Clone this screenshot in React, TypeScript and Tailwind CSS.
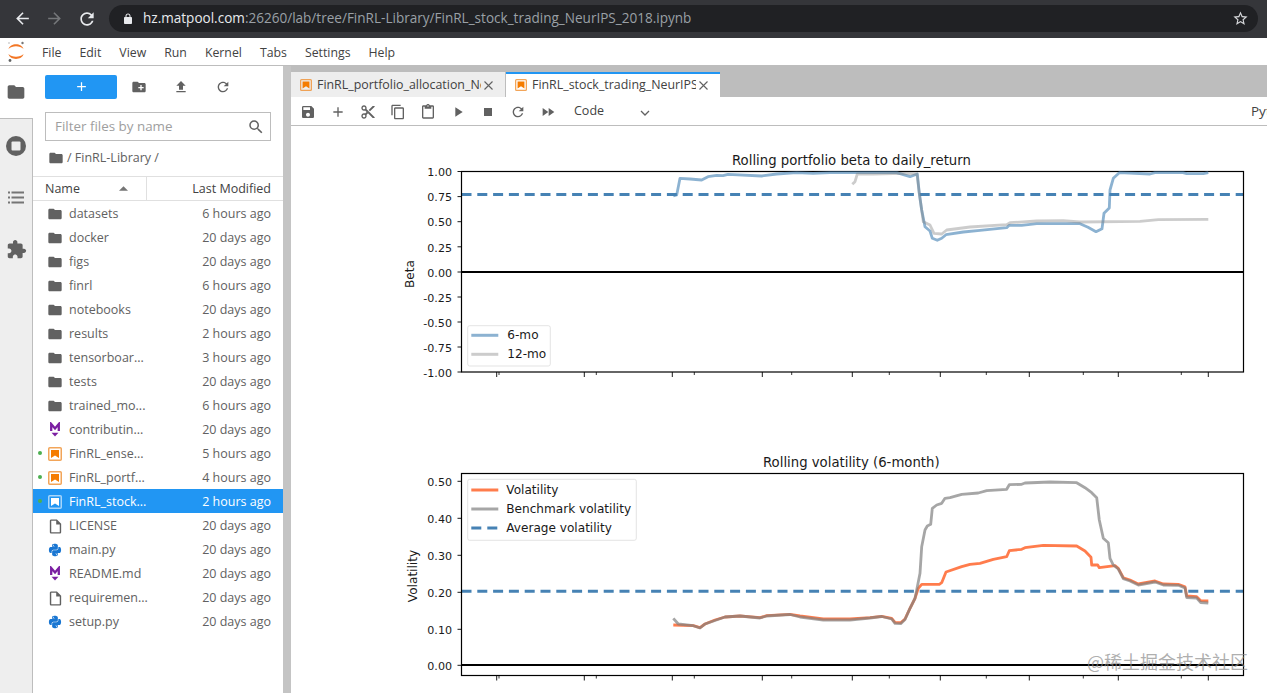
import { FaPython } from 'react-icons/fa';

const P = {
  folder: 'M10 4H4c-1.1 0-2 .9-2 2v12c0 1.1.9 2 2 2h16c1.1 0 2-.9 2-2V8c0-1.1-.9-2-2-2h-8l-2-2z',
  newFolder: 'M20 6h-8l-2-2H4c-1.11 0-1.99.89-1.99 2L2 18c0 1.11.89 2 2 2h16c1.11 0 2-.89 2-2V8c0-1.11-.89-2-2-2zm-1 8h-3v3h-2v-3h-3v-2h3V9h2v3h3v2z',
  upload: 'M9 16h6v-6h4l-7-7-7 7h4zm-4 2h14v2H5z',
  refresh: 'M17.65 6.35C16.2 4.9 14.21 4 12 4c-4.42 0-7.99 3.58-7.99 8s3.57 8 7.99 8c3.73 0 6.84-2.55 7.73-6h-2.08c-.82 2.33-3.04 4-5.65 4-3.31 0-6-2.69-6-6s2.69-6 6-6c1.66 0 3.14.69 4.22 1.78L13 11h7V4l-2.35 2.35z',
  search: 'M15.5 14h-.79l-.28-.27A6.47 6.47 0 0 0 16 9.5 6.5 6.5 0 1 0 9.5 16c1.61 0 3.09-.59 4.23-1.57l.27.28v.79l5 4.99L20.49 19l-4.99-5zm-6 0C7.01 14 5 11.99 5 9.5S7.01 5 9.5 5 14 7.01 14 9.5 11.99 14 9.5 14z',
  save: 'M17 3H5c-1.11 0-2 .9-2 2v14c0 1.1.89 2 2 2h14c1.1 0 2-.9 2-2V7l-4-4zm-5 16c-1.66 0-3-1.34-3-3s1.34-3 3-3 3 1.34 3 3-1.34 3-3 3zm3-10H5V5h10v4z',
  add: 'M19 13h-6v6h-2v-6H5v-2h6V5h2v6h6v2z',
  cut: 'M9.64 7.64c.23-.5.36-1.05.36-1.64 0-2.21-1.79-4-4-4S2 3.79 2 6s1.79 4 4 4c.59 0 1.14-.13 1.64-.36L10 12l-2.36 2.36C7.14 14.13 6.59 14 6 14c-2.21 0-4 1.79-4 4s1.79 4 4 4 4-1.79 4-4c0-.59-.13-1.14-.36-1.64L12 14l7 7h3v-1L9.64 7.64zM6 8c-1.1 0-2-.89-2-2s.9-2 2-2 2 .89 2 2-.9 2-2 2zm0 12c-1.1 0-2-.89-2-2s.9-2 2-2 2 .89 2 2-.9 2-2 2zm6-7.5c-.28 0-.5-.22-.5-.5s.22-.5.5-.5.5.22.5.5-.22.5-.5.5zM19 3l-6 6 2 2 7-7V3z',
  copy: 'M16 1H4c-1.1 0-2 .9-2 2v14h2V3h12V1zm3 4H8c-1.1 0-2 .9-2 2v14c0 1.1.9 2 2 2h11c1.1 0 2-.9 2-2V7c0-1.1-.9-2-2-2zm0 16H8V7h11v14z',
  paste: 'M19 2h-4.18C14.4.84 13.3 0 12 0c-1.3 0-2.4.84-2.82 2H5c-1.1 0-2 .9-2 2v16c0 1.1.9 2 2 2h14c1.1 0 2-.9 2-2V4c0-1.1-.9-2-2-2zm-7 0c.55 0 1 .45 1 1s-.45 1-1 1-1-.45-1-1 .45-1 1-1zm7 18H5V4h2v3h10V4h2v16z',
  play: 'M8 5v14l11-7z',
  stop: 'M6 6h12v12H6z',
  ff: 'M4 18l8.5-6L4 6v12zm9-12v12l8.5-6L13 6z',
  ext: 'M20.5 11H19V7c0-1.1-.9-2-2-2h-4V3.5C13 2.12 11.88 1 10.5 1S8 2.12 8 3.5V5H4c-1.1 0-1.99.9-1.99 2v3.8H3.5c1.49 0 2.7 1.21 2.7 2.7s-1.21 2.7-2.7 2.7H2V20c0 1.1.9 2 2 2h3.8v-1.5c0-1.49 1.21-2.7 2.7-2.7 1.49 0 2.7 1.21 2.7 2.7V22H17c1.1 0 2-.9 2-2v-4h1.5c1.38 0 2.5-1.12 2.5-2.5S21.88 11 20.5 11z',
  back: 'M20 11H7.83l5.59-5.59L12 4l-8 8 8 8 1.41-1.41L7.83 13H20v-2z',
  forward: 'M4 11h12.17l-5.59-5.59L12 4l8 8-8 8-1.41-1.41L16.17 13H4v-2z',
  lock: 'M18 8h-1V6c0-2.76-2.24-5-5-5S7 3.24 7 6v2H6c-1.1 0-2 .9-2 2v10c0 1.1.9 2 2 2h12c1.1 0 2-.9 2-2V10c0-1.1-.9-2-2-2zM9 8V6c0-1.66 1.34-3 3-3s3 1.34 3 3v2H9z',
  star: 'M22 9.24l-7.19-.62L12 2 9.19 8.63 2 9.24l5.46 4.73L5.82 21 12 17.27 18.18 21l-1.63-7.03L22 9.24zM12 15.4l-3.76 2.27 1-4.28-3.32-2.88 4.38-.38L12 6.1l1.71 4.04 4.38.38-3.32 2.88 1 4.28L12 15.4z',
  file: 'M14 2H6c-1.1 0-2 .9-2 2v16c0 1.1.9 2 2 2h12c1.1 0 2-.9 2-2V8l-6-6zm4 18H6V4h7v5h5v11z',
};

function Icon({ d, size = 16, className = 'text-[#616161]' }: { d: string; size?: number; className?: string }) {
  return (
    <svg width={size} height={size} viewBox="0 0 24 24" className={`fill-current shrink-0 ${className}`}>
      <path d={d} />
    </svg>
  );
}

function Notebook({ selected, size = 14 }: { selected?: boolean; size?: number }) {
  const c = selected ? '#ffffff' : '#ef8f2f';
  return (
    <svg width={size} height={size} viewBox="0 0 14 14" className="shrink-0">
      <rect x="0.75" y="0.75" width="12.5" height="12.5" rx="1" fill="none" stroke={c} strokeOpacity={selected ? 0.6 : 0.8} strokeWidth="1.5" />
      <path d="M3 3h8v8L7 8.4 3 11z" fill={selected ? '#fff' : '#f57c00'} />
    </svg>
  );
}

function Markdown() {
  return (
    <svg width="14" height="16" viewBox="0 0 14 16" className="shrink-0">
      <path d="M3.2 9V2L7 6.4 10.8 2v7" fill="none" stroke="#7b1fa2" strokeWidth="2.3" />
      <path d="M3.5 10.8h7L7 14.5z" fill="#7b1fa2" />
    </svg>
  );
}

function JupyterLogo() {
  return (
    <svg width="18" height="24" viewBox="0 0 18 24" className="shrink-0">
      <path d="M.5 9C2 2.5 14 2.5 15.5 9 12 5.4 4 5.4.5 9z" fill="#f37726" />
      <path d="M.5 14C2 20.5 14 20.5 15.5 14 12 17.6 4 17.6.5 14z" fill="#f37726" />
      <circle cx="14.5" cy="3" r="1.2" fill="#767677" />
      <circle cx="2" cy="20.5" r="1.4" fill="#616262" />
      <circle cx="1" cy="3" r="0.7" fill="#9e9e9e" />
    </svg>
  );
}

const menus = ['File', 'Edit', 'View', 'Run', 'Kernel', 'Tabs', 'Settings', 'Help'];

type Row = { name: string; when: string; kind: 'dir' | 'nb' | 'md' | 'file' | 'py'; running?: boolean; selected?: boolean };

const rows: Row[] = [
  { name: 'datasets', when: '6 hours ago', kind: 'dir' },
  { name: 'docker', when: '20 days ago', kind: 'dir' },
  { name: 'figs', when: '20 days ago', kind: 'dir' },
  { name: 'finrl', when: '6 hours ago', kind: 'dir' },
  { name: 'notebooks', when: '20 days ago', kind: 'dir' },
  { name: 'results', when: '2 hours ago', kind: 'dir' },
  { name: 'tensorboar...', when: '3 hours ago', kind: 'dir' },
  { name: 'tests', when: '20 days ago', kind: 'dir' },
  { name: 'trained_mo...', when: '6 hours ago', kind: 'dir' },
  { name: 'contributin...', when: '20 days ago', kind: 'md' },
  { name: 'FinRL_ense...', when: '5 hours ago', kind: 'nb', running: true },
  { name: 'FinRL_portf...', when: '4 hours ago', kind: 'nb', running: true },
  { name: 'FinRL_stock...', when: '2 hours ago', kind: 'nb', running: true, selected: true },
  { name: 'LICENSE', when: '20 days ago', kind: 'file' },
  { name: 'main.py', when: '20 days ago', kind: 'py' },
  { name: 'README.md', when: '20 days ago', kind: 'md' },
  { name: 'requiremen...', when: '20 days ago', kind: 'file' },
  { name: 'setup.py', when: '20 days ago', kind: 'py' },
];

function FileRow({ row }: { row: Row }) {
  return (
    <div className={`relative flex h-6 items-center pl-[15px] pr-[12px] pt-[2px] text-[12.5px] ${row.selected ? 'bg-[#2196f3] text-white' : 'text-[#616161]'}`}>
      {row.running && <span className="absolute left-[5px] top-[10px] h-[4px] w-[4px] rounded-full bg-[#4caf50]" />}
      <span className="flex w-[14px] justify-center">
        {row.kind === 'dir' && <Icon d={P.folder} size={16} />}
        {row.kind === 'nb' && <Notebook selected={row.selected} />}
        {row.kind === 'md' && <Markdown />}
        {row.kind === 'file' && <Icon d={P.file} size={17} />}
        {row.kind === 'py' && <FaPython size={14} className="text-[#1976d2]" />}
      </span>
      <span className="ml-[7px] flex-1 truncate">{row.name}</span>
      <span>{row.when}</span>
    </div>
  );
}

function Sidebar() {
  return (
    <div className="flex w-[33px] shrink-0 flex-col">
      <div className="flex h-[52px] items-center justify-center bg-white pr-px">
        <Icon d={P.folder} size={20} />
      </div>
      <div className="flex flex-1 flex-col items-center gap-[35px] border-r border-t border-[#bdbdbd] bg-[#eeeeee] pt-[17px]">
        <svg width="20" height="20" viewBox="0 0 20 20">
          <circle cx="10" cy="10" r="10" fill="#616161" />
          <rect x="5.5" y="5.5" width="9" height="9" rx="1" fill="#eee" />
        </svg>
        <svg width="16" height="13" viewBox="0 0 16 13">
          <g fill="#757575">
            <rect x="0" y="0.5" width="2" height="2" />
            <rect x="3.5" y="0.5" width="12.5" height="2" />
            <rect x="0" y="5.5" width="2" height="2" />
            <rect x="3.5" y="5.5" width="12.5" height="2" />
            <rect x="0" y="10.5" width="2" height="2" />
            <rect x="3.5" y="10.5" width="12.5" height="2" />
          </g>
        </svg>
        <Icon d={P.ext} size={21} className="text-[#616161]" />
      </div>
    </div>
  );
}

function FilePanel() {
  return (
    <div className="flex w-[250px] shrink-0 flex-col bg-white">
      <div className="flex h-[33px] items-center pl-[12px] pt-[8px]">
        <div className="flex h-6 w-[72px] items-center justify-center rounded-[2px] bg-[#2196f3]">
          <Icon d={P.add} size={15} className="text-white" />
        </div>
        <Icon d={P.newFolder} size={16} className="ml-[14px] text-[#616161]" />
        <Icon d={P.upload} size={16} className="ml-[26px] text-[#616161]" />
        <Icon d={P.refresh} size={16} className="ml-[26px] text-[#616161]" />
      </div>
      <div className="ml-[12px] mt-[13px] flex h-[29px] w-[226px] items-center justify-between border border-[#bdbdbd] pl-[9px] pr-[5px]">
        <span className="text-[13.4px] text-[#9e9e9e]">Filter files by name</span>
        <Icon d={P.search} size={18} className="text-[#616161]" />
      </div>
      <div className="flex h-[35px] items-center pb-px pl-[15px] text-[12.5px] text-[#616161]">
        <Icon d={P.folder} size={16} />
        <span className="ml-[3px]">/ FinRL-Library /</span>
      </div>
      <div className="flex h-[25px] border-y border-[#e0e0e0] text-[12.5px] text-[#424242]">
        <div className="relative flex w-[114px] items-center border-r border-[#e0e0e0] pl-[12px] pt-[2px]">
          Name
          <svg width="9" height="5" viewBox="0 0 10 5" className="absolute right-[18px] top-[9px]">
            <path d="M0 5L5 0l5 5z" fill="#757575" />
          </svg>
        </div>
        <div className="flex flex-1 items-center justify-end pr-[12px] pt-[2px]">Last Modified</div>
      </div>
      <div>
        {rows.map((r) => (
          <FileRow key={r.name} row={r} />
        ))}
      </div>
    </div>
  );
}

function Tab({ label, active }: { label: string; active?: boolean }) {
  return (
    <div className={`flex h-[25px] w-[214px] items-center pl-[9px] pr-[12px] pt-px text-[12.4px] text-[#424242] ${active ? 'bg-white shadow-[inset_0_2px_0_#2196f3]' : 'mr-px bg-[#eeeeee]'}`}>
      <Notebook size={12} />
      <span className="ml-[5px] flex-1 overflow-hidden whitespace-nowrap">{label}</span>
      <svg width="9" height="9" viewBox="0 0 9 9" className="ml-[3px] shrink-0">
        <path d="M.5.5l8 8M8.5.5l-8 8" stroke="#616161" strokeWidth="1.1" />
      </svg>
    </div>
  );
}

function Toolbar() {
  const icons = [P.save, P.add, P.cut, P.copy, P.paste, P.play, P.stop, P.refresh, P.ff];
  return (
    <div className="flex h-[29px] items-center border-b border-[#bdbdbd] bg-white pl-[2px] pt-px text-[12.5px] text-[#424242]">
      {icons.map((d, i) => (
        <span key={i} className="flex w-[30px] justify-center">
          <Icon d={d} size={16} />
        </span>
      ))}
      <span className="ml-[11px] w-[66px]">Code</span>
      <svg width="10" height="6" viewBox="0 0 10 6" className="mt-[2px]">
        <path d="M1 1l4 4 4-4" fill="none" stroke="#616161" strokeWidth="1.3" />
      </svg>
      <span className="ml-auto w-[16px] overflow-hidden text-[13.5px]">Python</span>
    </div>
  );
}

const CHART_FONT = { fontFamily: '"DejaVu Sans", sans-serif', fontSize: 11.1, fill: '#1a1a1a' } as const;
const LABEL_FONT = { ...CHART_FONT, fontSize: 12.1 };
const TITLE_FONT = { ...CHART_FONT, fontSize: 13.25 };

const MAJOR = [496.7, 584.3, 672.3, 762.3, 852.3, 940.3, 1029.3, 1118.3, 1208.3];
const MINOR = [499, 596.3, 694.3, 791.7, 889.3, 986.3, 1083.3, 1181.3];
const LEFT = 461.5;
const RIGHT = 1243.5;

function Axes({ top, bottom, yTicks, dashY, zeroY, ylabel, ylabelX, ylabelY, title, titleX, titleY }: {
  top: number; bottom: number; yTicks: [string, number][]; dashY: number; zeroY: number;
  ylabel: string; ylabelX: number; ylabelY: number; title: string; titleX: number; titleY: number;
}) {
  return (
    <>
      <line x1={LEFT} x2={RIGHT} y1={dashY} y2={dashY} stroke="#4682b4" strokeWidth="3" strokeDasharray="10 5.8" />
      <line x1={LEFT} x2={RIGHT} y1={zeroY} y2={zeroY} stroke="#000" strokeWidth="2" />
      <rect x={LEFT} y={top} width={RIGHT - LEFT} height={bottom - top} fill="none" stroke="#000" strokeWidth="1.2" />
      {yTicks.map(([label, y]) => (
        <g key={label}>
          <line x1={LEFT - 4} x2={LEFT} y1={y} y2={y} stroke="#000" strokeWidth="0.9" />
          <text x={LEFT - 9.5} y={y + 4.7} textAnchor="end" style={CHART_FONT}>{label}</text>
        </g>
      ))}
      {MAJOR.map((x) => <line key={x} x1={x} x2={x} y1={bottom} y2={bottom + 5} stroke="#000" strokeWidth="0.9" />)}
      {MINOR.map((x) => <line key={x} x1={x} x2={x} y1={bottom} y2={bottom + 3} stroke="#000" strokeWidth="0.8" />)}
      <text x={titleX} y={titleY} style={TITLE_FONT}>{title}</text>
      <text x={ylabelX} y={ylabelY} textAnchor="middle" transform={`rotate(-90 ${ylabelX} ${ylabelY})`} style={LABEL_FONT}>{ylabel}</text>
    </>
  );
}

const beta6 = '673.3,196 676.7,195 680,178.3 690,179 701.7,180 708,176.7 716.7,175.3 723,175.7 728,174.3 761.7,176 776.7,174 796.7,172.7 813,173.3 830,172.7 850,172.7 896.7,172.7 910,176.7 917.3,174 919.3,193.3 921.7,210 925,226.7 930,231 932.3,238.3 937.3,240.3 941.7,238.3 946,234.7 963.3,232 980,230.3 1006.7,227.7 1009.3,225.3 1021.7,225.3 1036.7,223.7 1080,223.7 1088,227.3 1096,231.7 1102,228.7 1104,213.3 1109.3,208 1110,190 1113.3,178.3 1119.3,172.7 1150,174 1155,172.7 1183,172.7 1186.7,173.7 1203.3,173.7 1208.3,172.7';
const beta12 = '852.3,184.3 855,181.7 857.3,174 873.3,174 903.3,173.3 917,174 919.3,193.3 923.3,221.7 930,225 934,233.3 941.7,234 946.7,230 970,227 1006.7,224.7 1010,222.7 1036.7,221 1063.3,220.7 1080,222 1140,221.3 1158.3,219.7 1208.3,219.3';

const volShared = '673.3,625 693.3,625.7 700,627.7 705,624 715,620 725,617 740,616 760,617.7 766.7,615.7 790,614.3 800,616 823.3,619 850,619 870,617.7 881.7,616.3 891.7,618.3 895,622.3 900.7,622.7 905,619 910,608.3 915,598.3 918.3,588.3';
const vol = volShared + ' 921.7,584.3 939.3,584.3 941.7,582.7 946,572 961.7,566.7 970,564.3 980,563.3 993.3,559.3 1006.7,556.7 1009.3,550.7 1021.7,549.3 1025,547.7 1043.3,545.3 1076.7,546 1085,551 1091,557.3 1091.7,565 1097.7,565 1099.3,567.7 1115,565.7 1118.3,568.3 1123.3,577.7 1130,580 1138.3,584 1155,581 1163.3,584 1178.3,584.3 1185,586.7 1186.7,596 1196.7,596.7 1200.7,600.7 1208.3,601';
const bench = '673.3,618.3 678.3,624 693.3,625.7 700,628 705,624 715,620.5 725,617 740,616 760,618 766.7,616 790,614.5 800,617 823.3,620 850,620 870,618 881.7,616.5 891.7,619 895,623.3 900.7,623.7 905,619.5 910,608.3 915,598.3 916.7,590 920,573.3 921.7,546.7 925,530 927.3,526 930.7,524.3 932.3,508.3 936.7,505 941.7,503.3 945,498.3 950,497.7 961.7,494.3 978.3,493 986.7,490.7 1006.7,489.3 1009.3,484.7 1021.7,484.3 1025,483 1050,482 1076.7,482.7 1085,487.7 1091.7,492.7 1096.7,497.7 1099.3,520 1103.3,538.3 1108.3,542.7 1110,558.3 1113.3,565 1118.3,569 1123.3,578.7 1130,581 1138.3,585 1155,582 1163.3,585 1178.3,585.3 1185,588 1186.7,597.5 1196.7,598 1200.7,602.5 1208.3,603';

function Legend({ x, y, w, h, items }: { x: number; y: number; w: number; h: number; items: { label: string; color: string; opacity?: number; dash?: boolean; tx: number; y: number }[] }) {
  return (
    <>
      <rect x={x} y={y} width={w} height={h} rx="2" fill="#fff" fillOpacity="0.8" stroke="#dcdcdc" strokeWidth="0.8" />
      {items.map((it) => (
        <g key={it.label}>
          <line x1={x + 3.6} x2={x + 30.6} y1={it.y} y2={it.y} stroke={it.color} strokeOpacity={it.opacity ?? 1} strokeWidth="3" strokeDasharray={it.dash ? '10 6' : undefined} />
          <text x={it.tx} y={it.y + 3.8} style={LABEL_FONT}>{it.label}</text>
        </g>
      ))}
    </>
  );
}

function BetaChart() {
  const ticks: [string, number][] = [['1.00', 171.5], ['0.75', 196.6], ['0.50', 221.7], ['0.25', 246.8], ['0.00', 272], ['-0.25', 297], ['-0.50', 322], ['-0.75', 347], ['-1.00', 372]];
  return (
    <svg width="976" height="262" viewBox="291 126 976 262" className="block">
      <Axes top={171.5} bottom={372} yTicks={ticks} dashY={194.5} zeroY={272} ylabel="Beta" ylabelX={414} ylabelY={274} title="Rolling portfolio beta to daily_return" titleX={732} titleY={165.3} />
      <polyline points={beta6} fill="none" stroke="#4682b4" strokeOpacity="0.62" strokeWidth="2.8" strokeLinejoin="round" />
      <polyline points={beta12} fill="none" stroke="#808080" strokeOpacity="0.4" strokeWidth="2.8" strokeLinejoin="round" />
      <Legend x={467.7} y={325.7} w={82.6} h={40.3} items={[
        { label: '6-mo', color: '#4682b4', opacity: 0.62, tx: 507.3, y: 335.3 },
        { label: '12-mo', color: '#808080', opacity: 0.4, tx: 507.3, y: 354.3 },
      ]} />
    </svg>
  );
}

function VolChart() {
  const ticks: [string, number][] = [['0.50', 481.3], ['0.40', 518.3], ['0.30', 555.3], ['0.20', 592.3], ['0.10', 629.3], ['0.00', 665.3]];
  return (
    <svg width="976" height="305" viewBox="291 388 976 305" className="block">
      <Axes top={473.5} bottom={675.5} yTicks={ticks} dashY={591.3} zeroY={665} ylabel="Volatility" ylabelX={417} ylabelY={576} title="Rolling volatility (6-month)" titleX={763} titleY={467.3} />
      <polyline points={vol} fill="none" stroke="#ff4500" strokeOpacity="0.7" strokeWidth="2.8" strokeLinejoin="round" />
      <polyline points={bench} fill="none" stroke="#808080" strokeOpacity="0.7" strokeWidth="2.8" strokeLinejoin="round" />
      <Legend x={467.7} y={479.3} w={168.6} h={61} items={[
        { label: 'Volatility', color: '#ff4500', opacity: 0.7, tx: 506.3, y: 490 },
        { label: 'Benchmark volatility', color: '#808080', opacity: 0.7, tx: 506.3, y: 509 },
        { label: 'Average volatility', color: '#4682b4', dash: true, tx: 506.3, y: 528 },
      ]} />
    </svg>
  );
}

export default function App() {
  return (
    <div className="relative flex h-[693px] w-[1267px] flex-col overflow-hidden bg-white" style={{ fontFamily: '"Open Sans", "Noto Sans", sans-serif' }}>
      {/* browser chrome */}
      <div className="flex h-[38px] shrink-0 items-center bg-[#35363a] pb-px pl-[13px] pr-[9px]">
        <Icon d={P.back} size={19} className="text-[#e8eaed]" />
        <Icon d={P.forward} size={19} className="ml-[13px] text-[#75777a]" />
        <Icon d={P.refresh} size={20} className="ml-[13px] text-[#e8eaed]" />
        <div className="ml-[12px] flex h-[27px] flex-1 items-center rounded-full bg-[#202124] pl-[13px] pr-[9px] text-[13.55px]">
          <Icon d={P.lock} size={12} className="text-[#e8eaed]" />
          <span className="ml-[9px] flex-1 whitespace-nowrap text-[#9aa0a6]">
            <span className="text-[#e8eaed]">hz.matpool.com</span>:26260/lab/tree/FinRL-Library/FinRL_stock_trading_NeurIPS_2018.ipynb
          </span>
          <Icon d={P.star} size={17} className="text-[#d5d7da]" />
        </div>
      </div>

      {/* jupyter menu */}
      <div className="flex h-[28px] shrink-0 items-center border-b border-[#bdbdbd] bg-white pl-[8px] text-[12.3px] text-[#424242]">
        <JupyterLogo />
        <div className="ml-[16px] flex gap-[18px] pt-[4px]">
          {menus.map((m) => <span key={m}>{m}</span>)}
        </div>
      </div>

      <div className="flex min-h-0 flex-1">
        <Sidebar />
        <FilePanel />
        <div className="w-[8px] shrink-0 bg-[#c4c4c4]" />
        <div className="relative flex min-w-0 flex-1 flex-col">
          <div className="flex h-[31px] items-end bg-[#bdbdbd]">
            <Tab label="FinRL_portfolio_allocation_NeurIPS" />
            <Tab label="FinRL_stock_trading_NeurIPS" active />
          </div>
          <Toolbar />
          <div className="min-h-0 flex-1 overflow-hidden bg-white">
            <BetaChart />
            <VolChart />
          </div>
          <span className="absolute bottom-[20px] right-[19px] text-[18px] leading-[24px] text-[#8c8c8c]/70" style={{ fontFamily: '"Noto Sans CJK SC", sans-serif' }}>
            @稀土掘金技术社区
          </span>
        </div>
      </div>
    </div>
  );
}
